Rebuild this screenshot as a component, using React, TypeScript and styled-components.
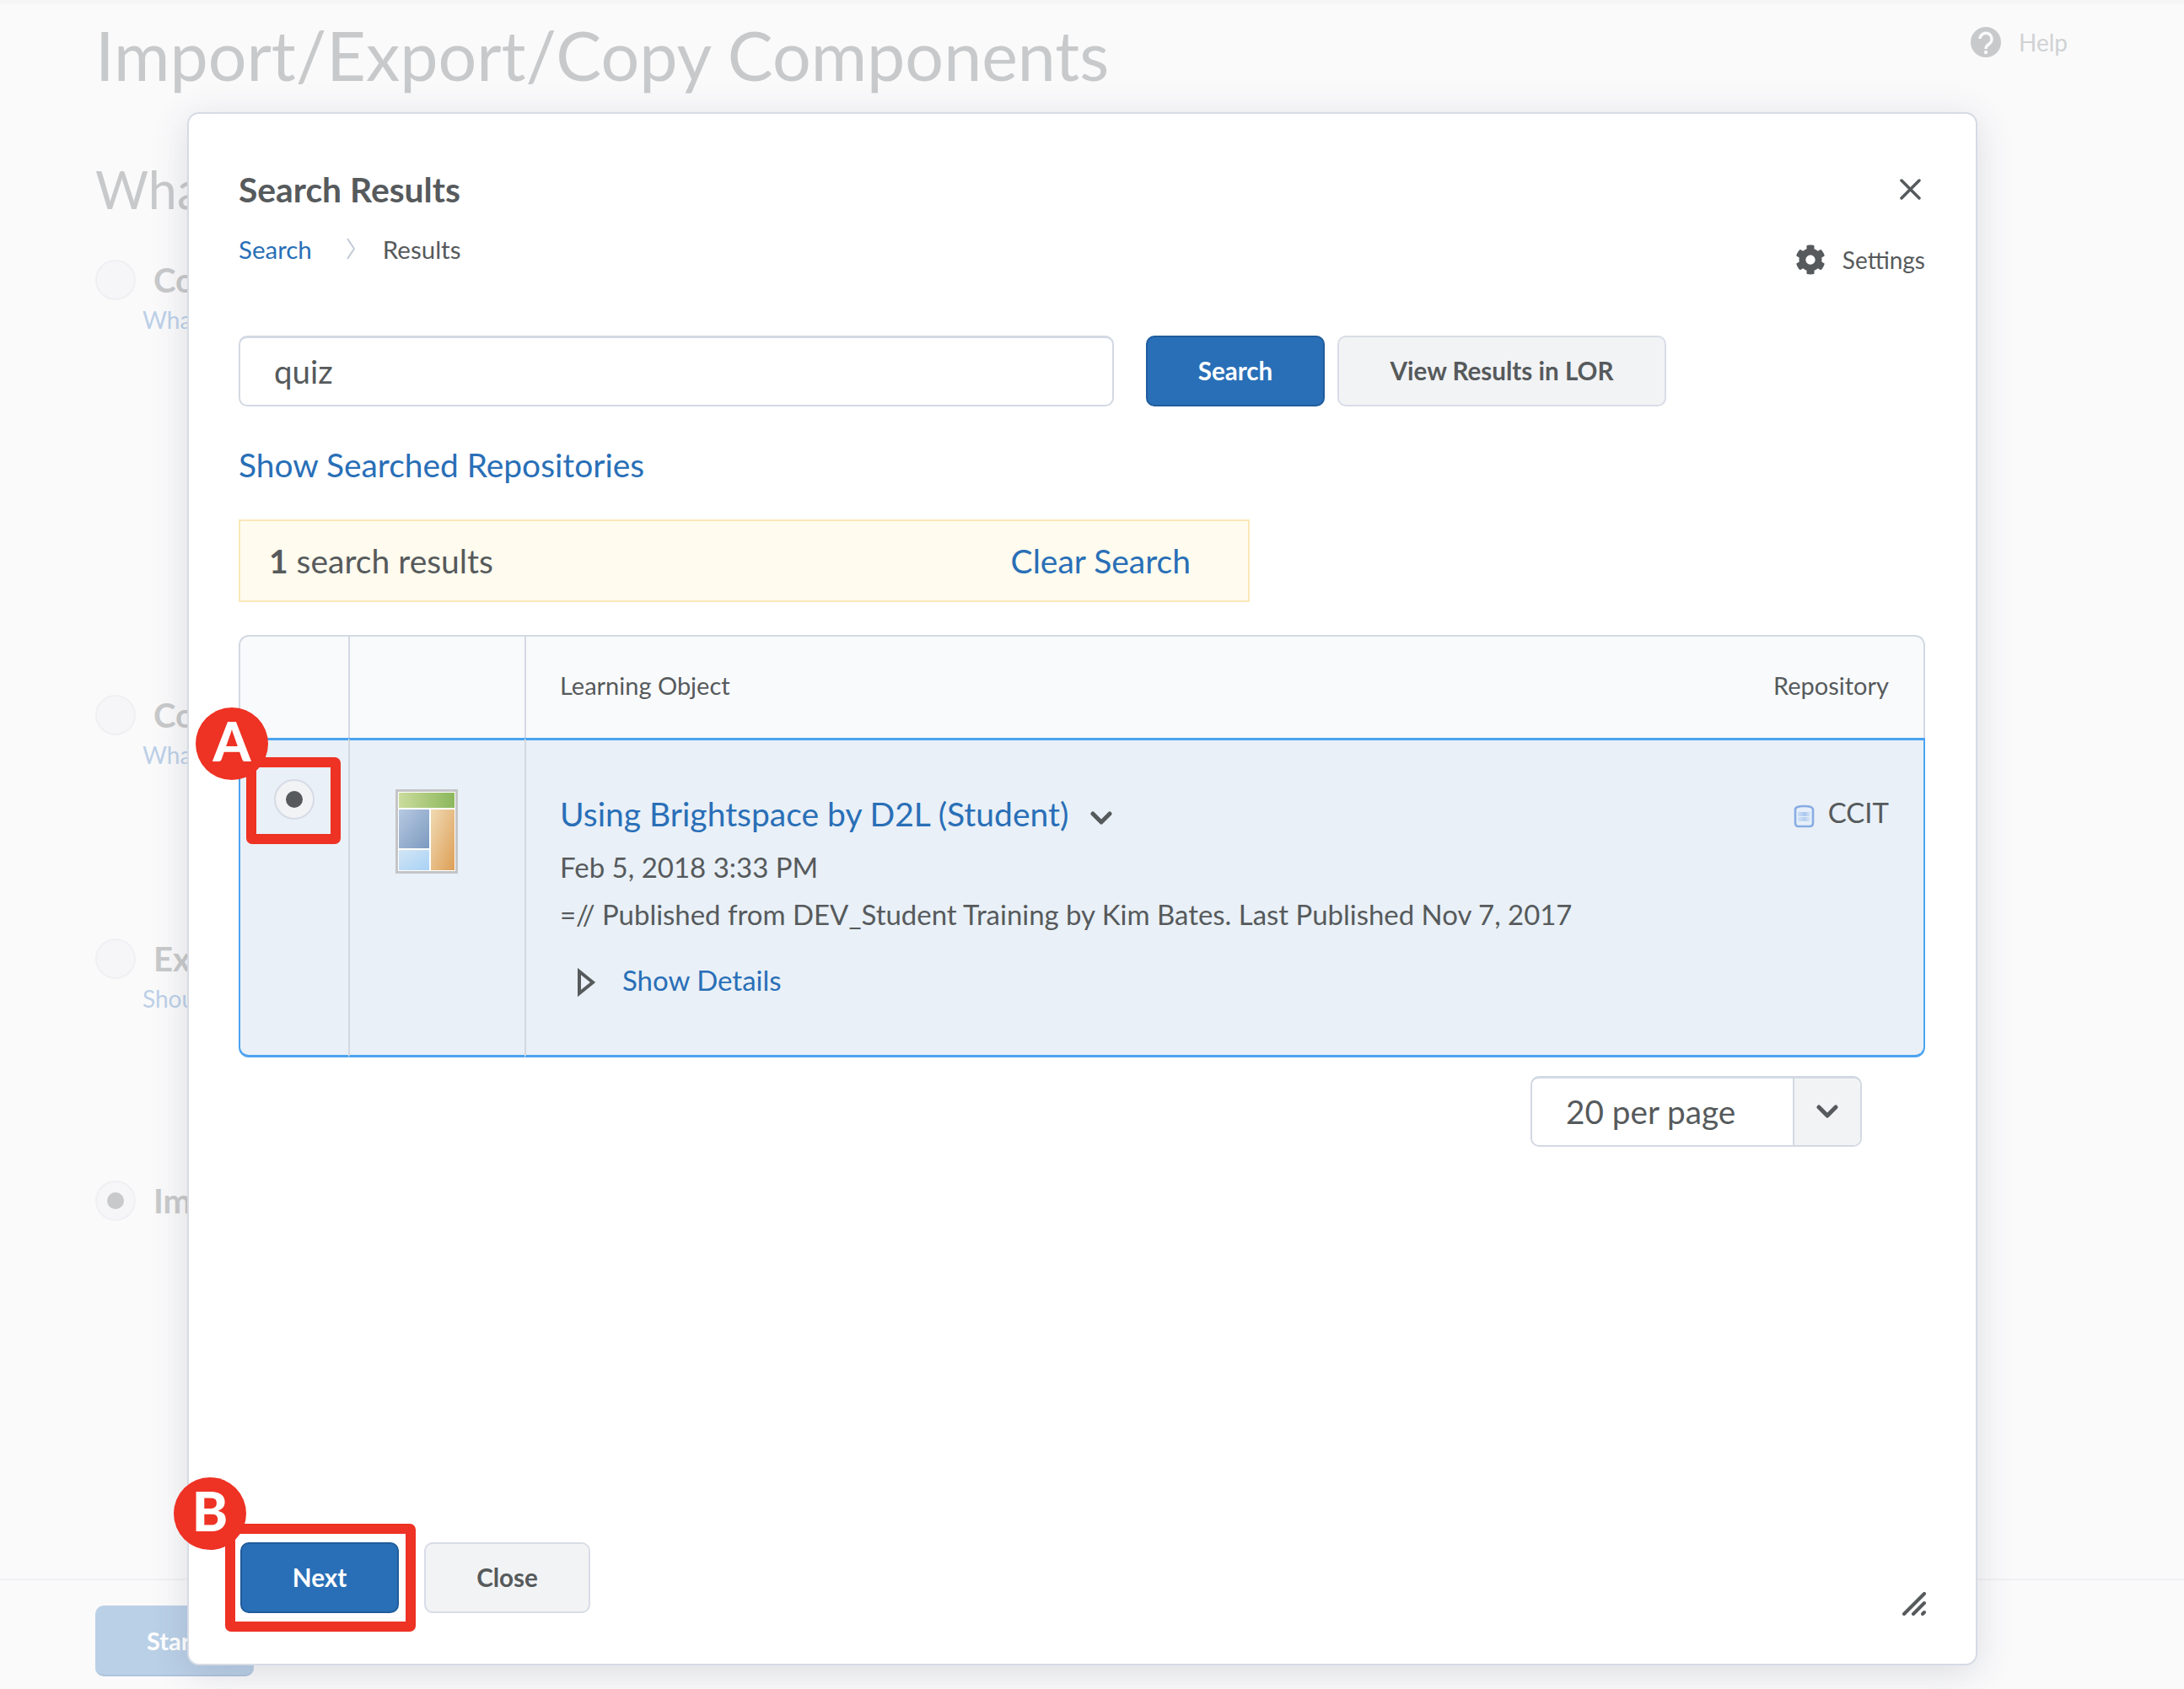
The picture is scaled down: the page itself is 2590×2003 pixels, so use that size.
import React from 'react';
import styled, { createGlobalStyle } from 'styled-components';
import { FaCog } from 'react-icons/fa';

const Global = createGlobalStyle`
  html, body { margin: 0; padding: 0; background: #fafafb; }
  body { font-family: Lato, "Open Sans", sans-serif; color: #565a5c; }
  * { box-sizing: border-box; }
`;

const Page = styled.div`
  position: relative;
  width: 2590px;
  height: 2003px;
  overflow: hidden;
  display: flex;
  flex-direction: column;
  background: #fafafb;
  border-top: 5px solid #f6f6f6;
`;

const PageHead = styled.header`
  display: flex;
  justify-content: space-between;
  align-items: flex-start;
  padding: 0 138px 0 113px;
`;

const PageTitle = styled.h1`
  margin: 10px 0 0;
  font-size: 80.75px;
  line-height: 100px;
  font-weight: 400;
  color: #c8c9ca;
  white-space: nowrap;
`;

const HelpLink = styled.div`
  display: flex;
  align-items: center;
  gap: 21px;
  margin-top: 27px;
  height: 36px;
  font-size: 28px;
  color: #d0d2d4;
`;

const Question = styled.h2`
  margin: 72px 0 0 113px;
  font-size: 61px;
  line-height: 76px;
  font-weight: 400;
  color: #c8c9ca;
`;

const Option = styled.div<{ $top: number }>`
  display: grid;
  grid-template-columns: 48px auto;
  justify-content: start;
  column-gap: 21px;
  margin: ${(p) => p.$top}px 0 0 113px;
`;

const GhostRadio = styled.span`
  width: 48px;
  height: 48px;
  border-radius: 50%;
  border: 2px solid #f0f0f3;
  background: #f6f6f8;
  display: flex;
  align-items: center;
  justify-content: center;
`;

const GhostDot = styled.span`
  width: 20px;
  height: 20px;
  border-radius: 50%;
  background: #c8c9ca;
`;

const OptionLabel = styled.span`
  font-size: 40px;
  line-height: 48px;
  font-weight: 700;
  color: #c8c9ca;
`;

const OptionHint = styled.span`
  grid-column: 1 / 3;
  padding-left: 56px;
  font-size: 28px;
  line-height: 40px;
  margin-top: 3px;
  color: #bcd0e8;
`;

const PageFoot = styled.footer`
  margin-top: auto;
  height: 131px;
  padding: 30px 0 0 113px;
  border-top: 2px solid #f1f1f4;
`;

const GhostButton = styled.div`
  width: 188px;
  height: 84px;
  border-radius: 10px;
  background: #bad0e7;
  border-bottom: 2px solid #aec3dc;
  color: #fff;
  font-size: 29px;
  font-weight: 700;
  display: flex;
  align-items: center;
  padding-left: 61px;
`;

const Dialog = styled.section`
  position: absolute;
  left: 222px;
  top: 128px;
  width: 2123px;
  height: 1842px;
  padding: 65px 60px 60px 59px;
  display: flex;
  flex-direction: column;
  background: #fff;
  border: 2px solid #d6dbe5;
  border-radius: 14px;
  box-shadow: 0 8px 44px rgba(60, 70, 90, 0.16);
`;

const DialogHead = styled.div`
  display: flex;
  justify-content: space-between;
  height: 126px;
`;

const DialogTitle = styled.h3`
  margin: 0;
  font-size: 40.8px;
  line-height: 50px;
  font-weight: 700;
  color: #565a5c;
`;

const Crumbs = styled.nav`
  display: flex;
  align-items: center;
  margin-top: 25px;
  height: 40px;
  font-size: 29.5px;
`;

const CrumbLink = styled.a`
  color: #296fb7;
`;

const CrumbArrow = styled.svg`
  margin: 0 33px 0 41px;
`;

const HeadTools = styled.div`
  display: flex;
  flex-direction: column;
  align-items: flex-end;
`;

const CloseIcon = styled.svg`
  display: block;
  margin: 12px 5px 0 0;
`;

const SettingsLink = styled.div`
  display: flex;
  align-items: center;
  gap: 20px;
  height: 36px;
  margin-top: 53px;
  font-size: 28px;
  color: #565a5c;
`;

const SearchRow = styled.div`
  display: flex;
  margin-top: 72px;
  height: 84px;
`;

const SearchInput = styled.div`
  width: 1038px;
  margin-right: 38px;
  padding: 0 0 2px 40px;
  display: flex;
  align-items: center;
  background: #fff;
  border: 2px solid #d3d9e3;
  border-top-width: 3px;
  border-radius: 10px;
  font-size: 38.5px;
  color: #565a5c;
`;

const Button = styled.button<{ $primary?: boolean; $width: number }>`
  width: ${(p) => p.$width}px;
  height: 84px;
  padding: 0 0 2px;
  font-family: inherit;
  font-size: 29.6px;
  font-weight: 700;
  border-radius: 10px;
  border: 2px solid ${(p) => (p.$primary ? '#1f5c9c' : '#d8dde6')};
  background: ${(p) => (p.$primary ? '#296fb7' : '#f2f3f5')};
  color: ${(p) => (p.$primary ? '#fff' : '#565a5c')};
`;

const ViewButton = styled(Button)`
  margin-left: 15px;
`;

const RepoLink = styled.a`
  margin-top: 44px;
  font-size: 38.9px;
  line-height: 50px;
  color: #296fb7;
`;

const Notice = styled.div`
  margin-top: 40px;
  width: 1199px;
  height: 98px;
  padding: 0 68px 0 34px;
  display: flex;
  align-items: center;
  justify-content: space-between;
  background: #fffbee;
  border: 2px solid #fbe8b8;
  font-size: 39px;
`;

const NoticeLink = styled.a`
  color: #296fb7;
`;

const Strong = styled.b`
  font-weight: 700;
`;

const Table = styled.div`
  margin-top: 39px;
  height: 501px;
  display: grid;
  grid-template-columns: 130px 209px 1fr;
  grid-template-rows: 122px 1fr;
`;

const HeadCell = styled.div<{ $first?: boolean; $last?: boolean }>`
  background: #f9fafc;
  border-top: 2px solid #d3d9e3;
  border-left: 2px solid #d3d9e3;
  ${(p) => p.$last && 'border-right: 2px solid #d3d9e3; border-top-right-radius: 12px;'}
  ${(p) => p.$first && 'border-top-left-radius: 12px;'}
  display: flex;
  align-items: center;
  justify-content: space-between;
  padding: 0 ${(p) => (p.$last ? 41 : 0)}px 5px ${(p) => (p.$last ? 40 : 0)}px;
  font-size: 29px;
`;

const RowCell = styled.div<{ $first?: boolean; $last?: boolean }>`
  position: relative;
  background: #e9f0f7;
  border-top: 3px solid #4ba3f0;
  border-bottom: 3px solid #4ba3f0;
  border-left: 2px solid ${(p) => (p.$first ? '#4ba3f0' : '#d3d9e3')};
  ${(p) => p.$last && 'border-right: 2px solid #4ba3f0; border-bottom-right-radius: 12px;'}
  ${(p) => p.$first && 'border-bottom-left-radius: 12px;'}
`;

const RadioCell = styled(RowCell)`
  padding: 46px 0 0 40px;
`;

const Radio = styled.span`
  width: 48px;
  height: 48px;
  display: flex;
  align-items: center;
  justify-content: center;
  background: #f2f3f5;
  border: 2px solid #d6dbe5;
  border-radius: 50%;
`;

const RadioDot = styled.span`
  width: 20px;
  height: 20px;
  border-radius: 50%;
  background: #565a5c;
`;

const ThumbCell = styled(RowCell)`
  padding: 58px 0 0 54px;
`;

const BodyCell = styled(RowCell)`
  padding: 62px 41px 0 40px;
  display: grid;
  grid-template-columns: 1fr auto;
  align-content: start;
`;

const ItemMain = styled.div`
  display: flex;
  flex-direction: column;
`;

const ItemTitle = styled.div`
  display: flex;
  align-items: center;
  height: 50px;
  font-size: 39px;
  color: #296fb7;
  svg { margin: 10px 0 0 26px; }
`;

const ItemDate = styled.div`
  margin-top: 18px;
  font-size: 33px;
  line-height: 40px;
`;

const ItemDesc = styled.div`
  margin-top: 16px;
  font-size: 32.95px;
  line-height: 40px;
`;

const DetailsLink = styled.div`
  display: flex;
  align-items: center;
  margin: 38px 0 0 20px;
  height: 40px;
  font-size: 33px;
  color: #296fb7;
  svg { margin: 6px 31px 0 0; }
`;

const RepoName = styled.div`
  display: flex;
  align-items: center;
  gap: 16px;
  height: 40px;
  font-size: 33px;
  margin-top: 3px;
  svg { margin-top: 9px; }
`;

const PagerRow = styled.div`
  display: flex;
  justify-content: flex-end;
  margin: 22px 75px 0 0;
`;

const Pager = styled.div`
  width: 393px;
  height: 84px;
  display: flex;
  background: #fff;
  border: 2px solid #d3d9e3;
  border-top-width: 3px;
  border-radius: 10px;
  overflow: hidden;
`;

const PagerValue = styled.div`
  flex: 1;
  display: flex;
  align-items: center;
  padding: 0 0 2px 40px;
  font-size: 38.7px;
`;

const PagerArrow = styled.div`
  width: 80px;
  display: flex;
  align-items: center;
  justify-content: center;
  background: #f2f3f5;
  border-left: 2px solid #d3d9e3;
`;

const DialogFoot = styled.div`
  margin-top: auto;
  display: flex;
  gap: 30px;
  padding-left: 2px;
`;

const Grip = styled.svg`
  position: absolute;
  right: 59px;
  bottom: 57px;
`;

const Marker = styled.div<{ $left: number; $top: number; $width: number; $height: number }>`
  position: absolute;
  left: ${(p) => p.$left}px;
  top: ${(p) => p.$top}px;
  width: ${(p) => p.$width}px;
  height: ${(p) => p.$height}px;
  border: 12px solid #ee3224;
  border-radius: 7px;
`;

const Badge = styled.div<{ $left: number; $top: number }>`
  position: absolute;
  left: ${(p) => p.$left}px;
  top: ${(p) => p.$top}px;
  width: 86px;
  height: 86px;
  padding-bottom: 6px;
  border-radius: 50%;
  background: #ee3224;
  color: #fff;
  display: flex;
  align-items: center;
  justify-content: center;
  font-size: 64px;
  font-weight: 900;
  line-height: 1;
`;

const Chevron = () => (
  <svg width="26" height="17" viewBox="0 0 26 17" fill="none" stroke="#565a5c" strokeWidth="5" strokeLinecap="round" strokeLinejoin="round">
    <polyline points="3,3 13,13 23,3" />
  </svg>
);

const HelpIcon = () => (
  <svg width="36" height="36" viewBox="0 0 36 36">
    <circle cx="18" cy="18" r="18" fill="#c8c9ca" />
    <path d="M11 14 a7 7 0 1 1 11 6 c-3 2 -4 3 -4 6" fill="none" stroke="#fafafb" strokeWidth="3.4" />
    <circle cx="18" cy="30" r="2.2" fill="#fafafb" />
  </svg>
);

const Thumbnail = () => (
  <svg width="74" height="100" viewBox="0 0 74 100">
    <defs>
      <linearGradient id="g1" x1="0" x2="1" y1="0" y2="0"><stop offset="0" stopColor="#cbdc9d" /><stop offset="1" stopColor="#8bb75c" /></linearGradient>
      <linearGradient id="g2" x1="0" x2="1" y1="0" y2="1"><stop offset="0" stopColor="#b6c9e2" /><stop offset="1" stopColor="#7c9abf" /></linearGradient>
      <linearGradient id="g3" x1="0" x2="1" y1="0" y2="1"><stop offset="0" stopColor="#f0dab4" /><stop offset="1" stopColor="#dd9f56" /></linearGradient>
      <linearGradient id="g4" x1="0" x2="1" y1="0" y2="1"><stop offset="0" stopColor="#d2e5f5" /><stop offset="1" stopColor="#a8d2f5" /></linearGradient>
    </defs>
    <rect x="1.5" y="1.5" width="71" height="97" fill="#fff" stroke="#c4c5c7" strokeWidth="3" />
    <rect x="4" y="4" width="66" height="18" fill="url(#g1)" />
    <rect x="4" y="24" width="36" height="46" fill="url(#g2)" />
    <rect x="4" y="72" width="36" height="24" fill="url(#g4)" />
    <rect x="42" y="24" width="28" height="72" fill="url(#g3)" />
  </svg>
);

const Cylinder = () => (
  <svg width="25" height="28" viewBox="0 0 25 28">
    <defs>
      <linearGradient id="c1" x1="0" x2="1" y1="0" y2="0"><stop offset="0" stopColor="#cfe0f6" /><stop offset="0.55" stopColor="#a9c6ee" /><stop offset="1" stopColor="#dbe8f8" /></linearGradient>
    </defs>
    <path d="M2 6 Q2 2 12.5 2 Q23 2 23 6 V22 Q23 26 19 26 H6 Q2 26 2 22 Z" fill="#e6eff9" stroke="#88ace4" strokeWidth="2.6" />
    <rect x="5" y="9" width="15" height="5" fill="url(#c1)" />
    <rect x="5" y="15" width="15" height="5" fill="url(#c1)" opacity="0.8" />
  </svg>
);

export default function App() {
  return (
    <Page>
      <Global />
      <PageHead>
        <PageTitle>Import/Export/Copy Components</PageTitle>
        <HelpLink>
          <HelpIcon />
          Help
        </HelpLink>
      </PageHead>
      <Question>What</Question>
      <Option $top={45}>
        <GhostRadio />
        <OptionLabel>Co</OptionLabel>
        <OptionHint>Wha</OptionHint>
      </Option>
      <Option $top={425}>
        <GhostRadio />
        <OptionLabel>Co</OptionLabel>
        <OptionHint>Wha</OptionHint>
      </Option>
      <Option $top={198}>
        <GhostRadio />
        <OptionLabel>Export</OptionLabel>
        <OptionHint>Should</OptionHint>
      </Option>
      <Option $top={196}>
        <GhostRadio><GhostDot /></GhostRadio>
        <OptionLabel>Import</OptionLabel>
      </Option>
      <PageFoot>
        <GhostButton>Start</GhostButton>
      </PageFoot>

      <Dialog>
        <DialogHead>
          <div>
            <DialogTitle>Search Results</DialogTitle>
            <Crumbs>
              <CrumbLink>Search</CrumbLink>
              <CrumbArrow width="10" height="26" viewBox="0 0 10 26" fill="none" stroke="#c3cad6" strokeWidth="2">
                <polyline points="1,1 9,13 1,25" />
              </CrumbArrow>
              Results
            </Crumbs>
          </div>
          <HeadTools>
            <CloseIcon width="25" height="25" viewBox="0 0 25 25" stroke="#565a5c" strokeWidth="3.5" strokeLinecap="round">
              <line x1="2" y1="2" x2="23" y2="23" />
              <line x1="23" y1="2" x2="2" y2="23" />
            </CloseIcon>
            <SettingsLink>
              <FaCog size={36} />
              Settings
            </SettingsLink>
          </HeadTools>
        </DialogHead>

        <SearchRow>
          <SearchInput>quiz</SearchInput>
          <Button $primary $width={212}>Search</Button>
          <ViewButton $width={390}>View Results in LOR</ViewButton>
        </SearchRow>

        <RepoLink>Show Searched Repositories</RepoLink>

        <Notice>
          <span><Strong>1</Strong> search results</span>
          <NoticeLink>Clear Search</NoticeLink>
        </Notice>

        <Table>
          <HeadCell $first />
          <HeadCell />
          <HeadCell $last>
            <span>Learning Object</span>
            <span>Repository</span>
          </HeadCell>
          <RadioCell $first>
            <Radio><RadioDot /></Radio>
          </RadioCell>
          <ThumbCell>
            <Thumbnail />
          </ThumbCell>
          <BodyCell $last>
            <ItemMain>
              <ItemTitle>
                Using Brightspace by D2L (Student)
                <Chevron />
              </ItemTitle>
              <ItemDate>Feb 5, 2018 3:33 PM</ItemDate>
              <ItemDesc>=// Published from DEV_Student Training by Kim Bates. Last Published Nov 7, 2017</ItemDesc>
              <DetailsLink>
                <svg width="23" height="34" viewBox="0 0 23 34" fill="none" stroke="#565a5c" strokeWidth="4">
                  <polygon points="3,4 19,17 3,30" />
                </svg>
                Show Details
              </DetailsLink>
            </ItemMain>
            <RepoName>
              <Cylinder />
              CCIT
            </RepoName>
          </BodyCell>
        </Table>

        <PagerRow>
          <Pager>
            <PagerValue>20 per page</PagerValue>
            <PagerArrow><Chevron /></PagerArrow>
          </Pager>
        </PagerRow>

        <DialogFoot>
          <Button $primary $width={188}>Next</Button>
          <Button $width={197}>Close</Button>
        </DialogFoot>

        <Grip width="28" height="28" viewBox="0 0 28 28" stroke="#565a5c" strokeWidth="4" strokeLinecap="round">
          <line x1="2" y1="26" x2="26" y2="2" />
          <line x1="13" y1="26" x2="26" y2="13" />
          <line x1="24" y1="26" x2="26" y2="24" />
        </Grip>
      </Dialog>

      <Marker $left={292} $top={893} $width={112} $height={103} />
      <Badge $left={232} $top={834}>A</Badge>
      <Marker $left={267} $top={1802} $width={226} $height={128} />
      <Badge $left={206} $top={1747}>B</Badge>
    </Page>
  );
}
